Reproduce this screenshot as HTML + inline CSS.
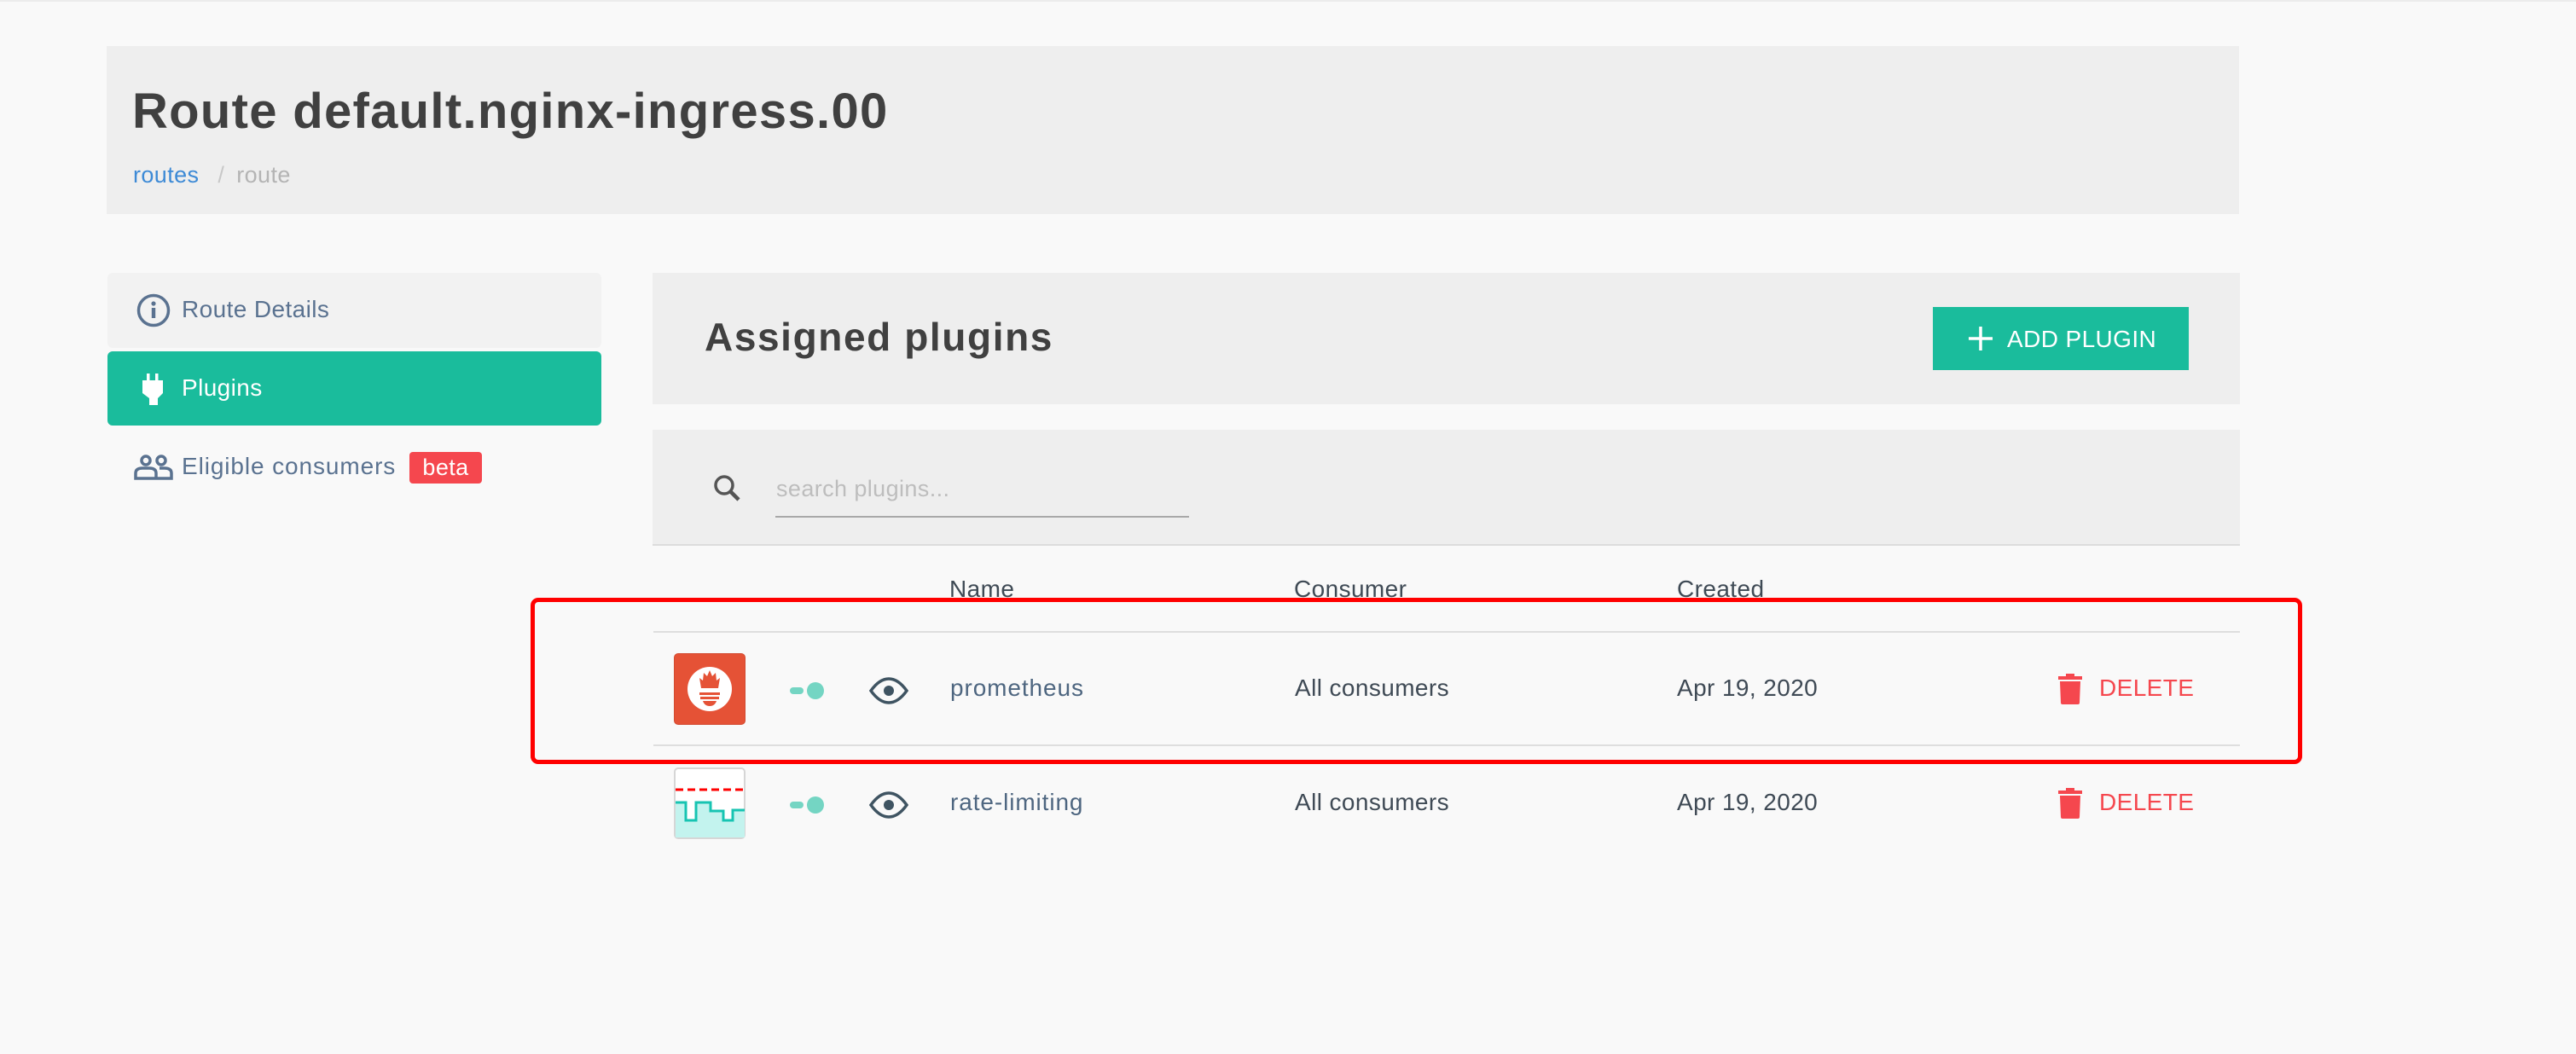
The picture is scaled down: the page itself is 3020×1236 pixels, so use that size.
<!DOCTYPE html>
<html><head><meta charset="utf-8"><style>
*{margin:0;padding:0;box-sizing:border-box}
body{width:3020px;height:1236px;background:#f9f9f9;font-family:"Liberation Sans",sans-serif;position:relative;overflow:hidden;border-top:2px solid #ececec}
.a{position:absolute}
.t{white-space:nowrap;letter-spacing:0.4px}
</style></head><body>
<div class="a" style="left:125px;top:52px;width:2500px;height:197px;background:#eeeeee"></div>
<div class="a t" style="left:155px;top:95px;font-size:58px;font-weight:bold;color:#404040;letter-spacing:1.3px">Route default.nginx-ingress.00</div>
<div class="a t" style="left:156px;top:188px;font-size:27px;color:#3d8ad6">routes <span style="color:#c8c8c8;margin:0 14px">/</span><span style="color:#b4b4b4">route</span></div>

<div class="a" style="left:126px;top:318px;width:579px;height:88px;background:#f2f2f2;border-radius:6px"></div>
<svg class="a" style="left:160px;top:342px" width="40" height="40" viewBox="0 0 40 40"><circle cx="20" cy="20" r="17.5" fill="none" stroke="#5a7290" stroke-width="3.5"/><circle cx="20" cy="12" r="2.6" fill="#5a7290"/><rect x="17.8" y="17" width="4.4" height="12" fill="#5a7290"/></svg>
<div class="a t" style="left:213px;top:345px;font-size:28px;color:#5a7290">Route Details</div>

<div class="a" style="left:126px;top:410px;width:579px;height:87px;background:#1abc9c;border-radius:6px"></div>
<svg class="a" style="left:166px;top:436px" width="28" height="37" viewBox="0 0 28 37"><rect x="6" y="0" width="3.5" height="9" fill="#fff"/><rect x="16" y="0" width="3.5" height="9" fill="#fff"/><path d="M1 8h24v15l-6 6v8h-10v-8l-8-6z" fill="#fff"/></svg>
<div class="a t" style="left:213px;top:437px;font-size:28px;color:#fff">Plugins</div>

<svg class="a" style="left:157px;top:531px" width="46" height="30" viewBox="0 0 46 30"><g fill="none" stroke="#5a7290" stroke-width="3.5"><circle cx="14" cy="7" r="5"/><circle cx="32" cy="7" r="5"/><path d="M2 28v-6q0-6 8-6h8q8 0 8 6v6zM26 28h18v-6q0-6-8-6h-6"/></g></svg>
<div class="a t" style="left:213px;top:529px;font-size:28px;color:#5a7290;letter-spacing:0.9px">Eligible consumers</div>
<div class="a t" style="left:480px;top:528px;width:85px;height:37px;background:#f5474e;border-radius:4px;color:#fff;font-size:27px;text-align:center;line-height:37px">beta</div>

<div class="a" style="left:765px;top:318px;width:1861px;height:154px;background:#eeeeee"></div>
<div class="a t" style="left:826px;top:366px;font-size:46px;font-weight:bold;color:#404040;letter-spacing:1.6px">Assigned plugins</div>
<div class="a" style="left:2266px;top:358px;width:300px;height:74px;background:#1abc9c"></div>
<svg class="a" style="left:2307px;top:380px" width="30" height="30" viewBox="0 0 30 30"><path d="M15 1v28M1 15h28" stroke="#fff" stroke-width="3.5"/></svg>
<div class="a t" style="left:2353px;top:380px;font-size:28px;color:#fff">ADD PLUGIN</div>

<div class="a" style="left:765px;top:502px;width:1861px;height:136px;background:#eeeeee;border-bottom:2px solid #dcdcdc"></div>
<svg class="a" style="left:834px;top:552px" width="40" height="40" viewBox="0 0 40 40"><circle cx="15" cy="15" r="10" fill="none" stroke="#555" stroke-width="3.5"/><path d="M22 22l10 10" stroke="#555" stroke-width="4.5"/></svg>
<div class="a t" style="left:910px;top:556px;font-size:27px;color:#bdbdbd">search plugins...</div>
<div class="a" style="left:909px;top:603px;width:485px;height:2px;background:#a8a8a8"></div>

<div class="a t" style="left:1113px;top:673px;font-size:28px;color:#3f4a55">Name</div>
<div class="a t" style="left:1517px;top:673px;font-size:28px;color:#3f4a55">Consumer</div>
<div class="a t" style="left:1966px;top:673px;font-size:28px;color:#3f4a55">Created</div>
<div class="a" style="left:766px;top:738px;width:1860px;height:2px;background:#dedede"></div>
<div class="a" style="left:766px;top:871px;width:1860px;height:2px;background:#dedede"></div>

<!-- row 1 -->
<div class="a" style="left:790px;top:764px;width:84px;height:84px;background:#e55236;border-radius:5px;border:1px solid #d24a30"></div>
<svg class="a" style="left:805px;top:779px" width="54" height="54" viewBox="0 0 54 54"><circle cx="27" cy="27" r="26" fill="#fff"/><path d="M27 5l3 7 4-4 1 9 4-3-2 12h-20l-2-12 4 3 1-9 4 4z" fill="#e55236"/><rect x="15" y="31" width="24" height="3" fill="#e55236"/><rect x="16" y="36" width="22" height="3" fill="#e55236"/><path d="M19 41h16q-2 6-8 6t-8-6z" fill="#e55236"/></svg>
<svg class="a" style="left:924px;top:796px" width="44" height="24" viewBox="0 0 44 24"><rect x="2" y="8" width="16" height="8" rx="4" fill="#74d5c3"/><circle cx="32" cy="12" r="10" fill="#74d5c3"/></svg>
<svg class="a" style="left:1019px;top:792px" width="46" height="32" viewBox="0 0 46 32"><path d="M2 16Q12 2 23 2T44 16Q34 30 23 30T2 16z" fill="none" stroke="#3f5462" stroke-width="3.5"/><circle cx="23" cy="16" r="6" fill="#3f5462"/></svg>
<div class="a t" style="left:1114px;top:789px;font-size:28px;color:#4e6680;letter-spacing:0.9px">prometheus</div>
<div class="a t" style="left:1518px;top:789px;font-size:28px;color:#3f4a55">All consumers</div>
<div class="a t" style="left:1966px;top:789px;font-size:28px;color:#3f4a55">Apr 19, 2020</div>
<svg class="a" style="left:2412px;top:788px" width="30" height="36" viewBox="0 0 30 36"><rect x="1" y="3" width="28" height="4" fill="#f5474e"/><rect x="10" y="0" width="10" height="4" fill="#f5474e"/><path d="M3 9h24l-1 25q0 2-2 2h-18q-2 0-2-2z" fill="#f5474e"/></svg>
<div class="a t" style="left:2461px;top:789px;font-size:28px;color:#f5474e">DELETE</div>

<!-- row 2 -->
<svg class="a" style="left:790px;top:898px" width="84" height="84" viewBox="0 0 84 84"><rect x="1" y="1" width="82" height="82" rx="4" fill="#fff" stroke="#d6d6d6" stroke-width="2"/><polygon points="2,41 14,41 14,62 26,62 26,41 43,41 43,51 58,51 58,62 69,62 69,50 83,50 83,82 2,82" fill="#c3f3ee"/><polyline points="2,41 14,41 14,62 26,62 26,41 43,41 43,51 58,51 58,62 69,62 69,50 83,50" fill="none" stroke="#17c4b2" stroke-width="3"/><line x1="2" y1="26" x2="83" y2="26" stroke="#f00" stroke-width="3" stroke-dasharray="9 5"/></svg>
<svg class="a" style="left:924px;top:930px" width="44" height="24" viewBox="0 0 44 24"><rect x="2" y="8" width="16" height="8" rx="4" fill="#74d5c3"/><circle cx="32" cy="12" r="10" fill="#74d5c3"/></svg>
<svg class="a" style="left:1019px;top:926px" width="46" height="32" viewBox="0 0 46 32"><path d="M2 16Q12 2 23 2T44 16Q34 30 23 30T2 16z" fill="none" stroke="#3f5462" stroke-width="3.5"/><circle cx="23" cy="16" r="6" fill="#3f5462"/></svg>
<div class="a t" style="left:1114px;top:923px;font-size:28px;color:#4e6680;letter-spacing:0.9px">rate-limiting</div>
<div class="a t" style="left:1518px;top:923px;font-size:28px;color:#3f4a55">All consumers</div>
<div class="a t" style="left:1966px;top:923px;font-size:28px;color:#3f4a55">Apr 19, 2020</div>
<svg class="a" style="left:2412px;top:922px" width="30" height="36" viewBox="0 0 30 36"><rect x="1" y="3" width="28" height="4" fill="#f5474e"/><rect x="10" y="0" width="10" height="4" fill="#f5474e"/><path d="M3 9h24l-1 25q0 2-2 2h-18q-2 0-2-2z" fill="#f5474e"/></svg>
<div class="a t" style="left:2461px;top:923px;font-size:28px;color:#f5474e">DELETE</div>

<div class="a" style="left:622px;top:699px;width:2077px;height:195px;border:5px solid #ff0000;border-radius:9px"></div>
</body></html>
